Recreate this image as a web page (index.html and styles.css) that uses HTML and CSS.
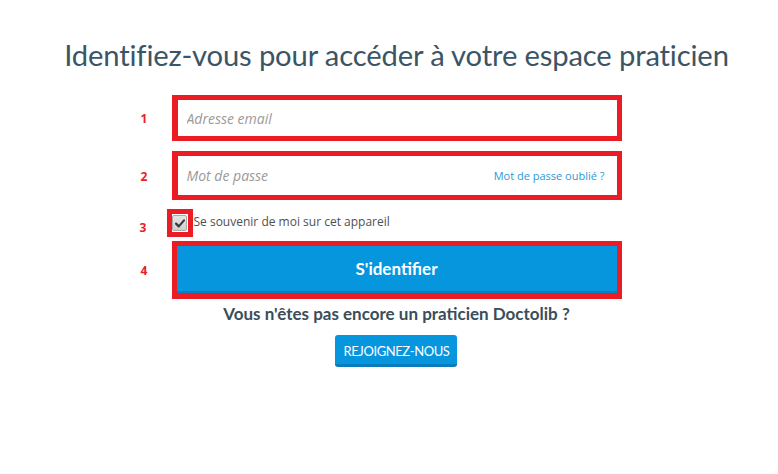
FILE: index.html
```html
<!DOCTYPE html>
<html lang="fr">
<head>
  <meta charset="UTF-8" />
  <meta name="viewport" content="width=device-width, initial-scale=1.0" />
  <title>Doctolib Pro - Identification</title>
  <link rel="stylesheet" href="styles.css">
</head>
<body>
  <div class="page">
    <h1 class="title">Identifiez-vous pour accéder à votre espace praticien</h1>

    <form class="login-form" onsubmit="return false">
      <div class="row row-email">
        <span class="step">1</span>
        <div class="mark field">
          <input type="email" class="input" placeholder="Adresse email" />
        </div>
      </div>

      <div class="row row-password">
        <span class="step">2</span>
        <div class="mark field">
          <input type="password" class="input" placeholder="Mot de passe" />
          <a href="#" class="forgot">Mot de passe oublié ?</a>
        </div>
      </div>

      <div class="row row-remember">
        <span class="step step-small">3</span>
        <div class="mark mark-check">
          <span class="checkbox">
            <svg width="10" height="9" viewBox="0 0 10 9">
              <path d="M1 4.6 L3.8 7.4 L9 1.4" fill="none" stroke="#3a3a3a" stroke-width="2.2" stroke-linecap="round" stroke-linejoin="round"/>
            </svg>
          </span>
        </div>
        <label class="remember">Se souvenir de moi sur cet appareil</label>
      </div>

      <div class="row row-submit">
        <span class="step">4</span>
        <div class="mark">
          <button type="submit" class="submit-btn">S'identifier</button>
        </div>
      </div>
    </form>

    <div class="join">
      <p class="join-text">Vous n'êtes pas encore un praticien Doctolib ?</p>
      <a href="#" class="join-btn">REJOIGNEZ-NOUS</a>
    </div>
  </div>
</body>
</html>
```

FILE: styles.css
```css
html, body {
  margin: 0;
  padding: 0;
  background: #fff;
  font-family: 'Open Sans', sans-serif;
}

.page {
  width: 763px;
  padding-left: 15px;
  padding-top: 37px;
  display: flex;
  flex-direction: column;
  align-items: center;
}

.title {
  margin: 0;
  font-family: 'Lato', sans-serif;
  font-weight: 400;
  font-size: 29.2px;
  line-height: 36px;
  color: #3b5567;
  letter-spacing: -0.15px;
}

.login-form {
  width: 450px;
  margin-top: 22px;
  display: flex;
  flex-direction: column;
}

.row {
  position: relative;
  display: flex;
  align-items: center;
}

.step {
  position: absolute;
  left: -31px;
  top: 50%;
  transform: translateY(-50%);
  color: #e8202a;
  font-family: 'Open Sans', sans-serif;
  font-weight: 700;
  font-size: 12px;
}

.step-small {
  left: -27px;
  margin-top: 4px;
}

.mark {
  flex: 1;
  border: 5px solid #ec1c24;
  border-left-width: 6px;
  background: #fff;
}

.field {
  display: flex;
  align-items: center;
  padding: 0 12px 0 9px;
}

.row-email .field {
  height: 36px;
}

.row-password {
  margin-top: 10px;
}

.row-password .field {
  height: 39px;
}

.input {
  flex: 1;
  border: none;
  outline: none;
  padding: 0;
  font-family: 'Open Sans', sans-serif;
  font-size: 14px;
  color: #444;
  background: transparent;
}

.input::placeholder {
  color: #9a9a9a;
  font-style: italic;
}

.forgot {
  font-size: 11px;
  color: #2d97d6;
  text-decoration: none;
  padding-bottom: 1px;
}

.row-remember {
  margin-top: 9px;
  margin-left: -5px;
}

.mark-check {
  flex: none;
  width: 16px;
  height: 18px;
  border-width: 5px;
  display: flex;
  align-items: center;
  justify-content: center;
}

.checkbox {
  width: 13px;
  height: 14px;
  border: 1px solid #aaa;
  border-radius: 2px;
  background: linear-gradient(#e6e6e6, #cfcfcf);
  display: flex;
  align-items: center;
  justify-content: center;
}

.remember {
  margin-left: 1px;
  margin-top: -4px;
  font-size: 12px;
  color: #4f4f4f;
}

.row-submit {
  margin-top: 4px;
}

.row-submit .mark {
  border-width: 5px;
  border-bottom-width: 6px;
}

.submit-btn {
  display: block;
  width: 100%;
  height: 47px;
  border: none;
  border-bottom: 2px solid #0a7fc0;
  background: #0596de;
  color: #fff;
  font-family: 'Lato', sans-serif;
  font-weight: 700;
  font-size: 17px;
  cursor: pointer;
}

.join {
  display: flex;
  flex-direction: column;
  align-items: center;
}

.join-text {
  margin: 4px 0 0;
  font-family: 'Lato', sans-serif;
  font-weight: 700;
  font-size: 17px;
  line-height: 22px;
  color: #3a4d5a;
}

.join-btn {
  margin-top: 10px;
  width: 122px;
  height: 32px;
  box-sizing: border-box;
  border-radius: 3px;
  background: #0596de;
  border-bottom: 3px solid #0a7bbd;
  color: #fff;
  font-family: 'Lato', sans-serif;
  font-size: 13px;
  letter-spacing: -0.4px;
  text-decoration: none;
  display: flex;
  align-items: center;
  justify-content: center;
  padding-top: 2px;
}
```
